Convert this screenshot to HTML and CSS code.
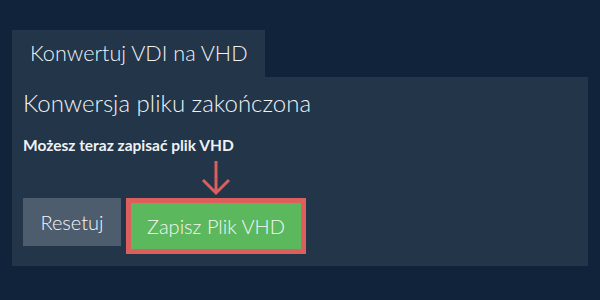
FILE: index.html
```html
<!DOCTYPE html>
<html lang="pl">
<head>
<meta charset="utf-8">
<link rel="stylesheet" href="styles.css">
</head>
<body>
<div class="wrap">
  <div class="tab">Konwertuj VDI na VHD</div>
  <div class="panel">
    <h1 class="title">Konwersja pliku zakończona</h1>
    <p class="note">Możesz teraz zapisać plik VHD</p>
    <div class="actions">
      <button class="btn reset">Resetuj</button>
      <div class="save-wrap">
        <svg class="arrow" width="30" height="36" viewBox="0 0 30 36" aria-hidden="true">
          <path d="M15 1 V33 M2 20 L15 33 L28 20" fill="none" stroke="#d9605c" stroke-width="3"/>
        </svg>
        <button class="btn save">Zapisz Plik VHD</button>
      </div>
    </div>
  </div>
</div>
</body>
</html>
```

FILE: styles.css
```css
html, body {
  margin: 0;
  padding: 0;
  background: #11233a;
}
body {
  font-family: Lato, "Liberation Sans", sans-serif;
  color: #eef2f5;
}
.wrap {
  padding: 30px 12px 0;
}
.tab {
  display: inline-block;
  width: 253px;
  box-sizing: border-box;
  height: 47px;
  padding: 9px 0 0 18px;
  background: #223549;
  font-size: 21.6px;
  font-weight: 300;
  line-height: 28px;
}
.panel {
  height: 189px;
  box-sizing: border-box;
  background: #223549;
  padding: 11px 10px 0 11px;
}
.title {
  margin: 0;
  font-weight: 300;
  font-size: 24px;
  line-height: 30px;
}
.note {
  margin: 17px 0 0 0;
  font-weight: 700;
  font-size: 15.5px;
  line-height: 20px;
}
.actions {
  display: flex;
  align-items: flex-start;
  gap: 5px;
  margin-top: 43px;
}
.btn {
  font-family: Lato, "Liberation Sans", sans-serif;
  font-size: 20px;
  font-weight: 300;
  color: #f4f6f8;
  border: none;
  margin: 0;
  cursor: pointer;
}
.reset {
  width: 98px;
  height: 48px;
  background: #4d5d6e;
  padding: 0;
}
.save-wrap {
  position: relative;
}
.save {
  width: 180px;
  height: 56px;
  background: #5cb85c;
  border: 5px solid #dc5f5d;
  padding: 0;
  display: block;
}
.arrow {
  position: absolute;
  left: 75px;
  top: -38px;
}
```
